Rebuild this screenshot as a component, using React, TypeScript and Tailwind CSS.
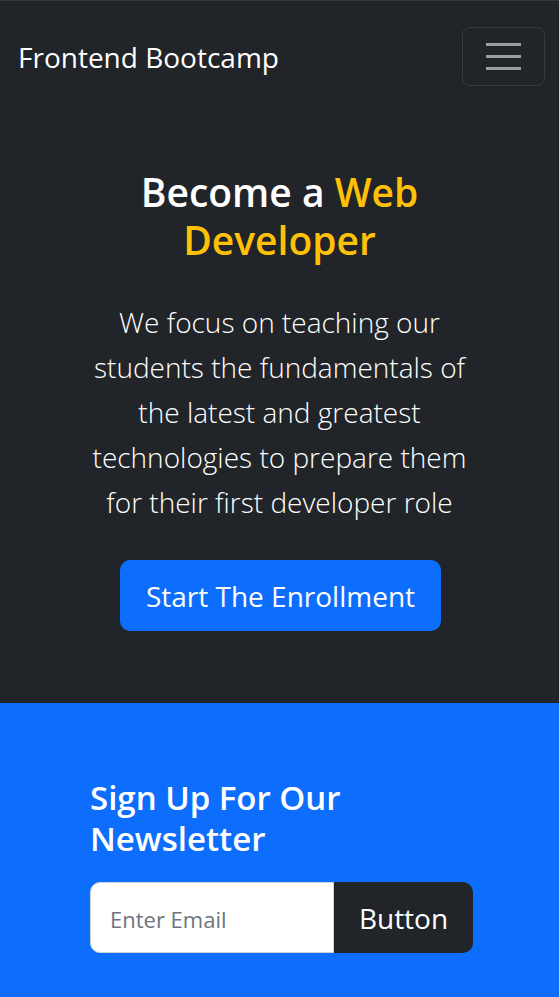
export default function App() {
  return (
    <div className="min-h-[997px] bg-[#0d6efd] font-['Open_Sans',sans-serif]">
      <div className="border-t border-[#35383c] bg-[#212529]">
        <nav className="flex items-center justify-between py-[26px] pl-[18px] pr-[14px]">
          <span className="text-[28px] text-white">Frontend Bootcamp</span>
          <button className="flex h-[59px] w-[83px] flex-col items-center justify-center gap-[9.5px] rounded-lg border border-white/10">
            <span className="h-[2.5px] w-[35px] bg-white/55" />
            <span className="h-[2.5px] w-[35px] bg-white/55" />
            <span className="h-[2.5px] w-[35px] bg-white/55" />
          </button>
        </nav>
        <section className="flex flex-col items-center px-6 pb-[72px] pt-[56px] text-center">
          <h1 className="max-w-[330px] text-[39px] font-semibold leading-[48px] text-white">
            Become a <span className="text-[#ffc107]">Web</span>{" "}
            <span className="text-[#ffc107]">Developer</span>
          </h1>
          <p className="mt-[36px] max-w-[390px] text-[28px] font-light leading-[45px] text-white">
            We focus on teaching our students the fundamentals of the latest and greatest technologies to prepare
            them for their first developer role
          </p>
          <button className="ml-[2px] mt-[35px] h-[71px] rounded-[10px] bg-[#0d6efd] px-[26px] text-[28px] text-white">
            Start The Enrollment
          </button>
        </section>
      </div>
      <section className="flex justify-center pb-12 pl-1 pt-[74px]">
        <div className="w-[383px]">
          <h3 className="text-[33px] font-semibold leading-[41px] text-white">Sign Up For Our Newsletter</h3>
          <div className="mt-[23px] flex h-[71px]">
            <input
              placeholder="Enter Email"
              className="w-[244px] rounded-l-[10px] border border-[#ced4da] bg-white px-[19px] pt-[3px] text-[22px] text-[#212529] outline-none placeholder:text-[#6c757d]"
            />
            <button className="flex-1 rounded-r-[10px] bg-[#212529] text-[28px] text-white">Button</button>
          </div>
        </div>
      </section>
    </div>
  );
}
